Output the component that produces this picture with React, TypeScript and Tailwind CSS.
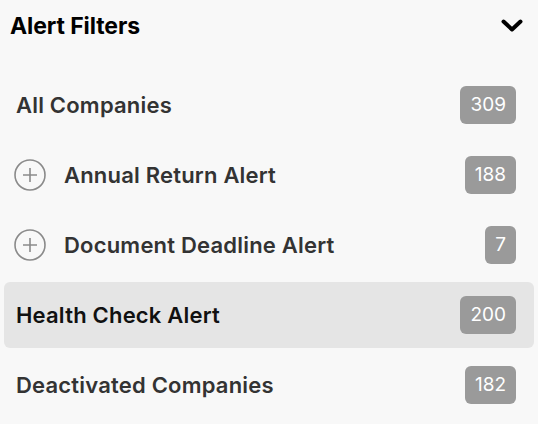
interface FilterRow {
  label: string;
  count: number;
  expandable?: boolean;
  active?: boolean;
}

const rows: FilterRow[] = [
  { label: "All Companies", count: 309 },
  { label: "Annual Return Alert", count: 188, expandable: true },
  { label: "Document Deadline Alert", count: 7, expandable: true },
  { label: "Health Check Alert", count: 200, active: true },
  { label: "Deactivated Companies", count: 182 },
];

function PlusCircle() {
  return (
    <svg width="32" height="32" viewBox="0 0 32 32" className="shrink-0">
      <circle cx="16" cy="16" r="15" fill="none" stroke="#8a8a8a" strokeWidth="1.6" />
      <path d="M16 9v14M9 16h14" stroke="#8a8a8a" strokeWidth="1.6" />
    </svg>
  );
}

function Chevron() {
  return (
    <svg width="22" height="14" viewBox="0 0 22 14">
      <path
        d="M2.5 2.5 11 10.5 19.5 2.5"
        fill="none"
        stroke="#000"
        strokeWidth="4"
        strokeLinecap="round"
        strokeLinejoin="round"
      />
    </svg>
  );
}

export default function App() {
  return (
    <div
      className="w-[538px] h-[424px] bg-[#f8f8f8] overflow-hidden"
      style={{ fontFamily: "Inter, 'Open Sans', sans-serif" }}
    >
      <div className="flex items-center justify-between h-[52px] pl-[10px] pr-[15px]">
        <h2 className="text-[23px] font-bold text-black tracking-[-0.1px]">Alert Filters</h2>
        <Chevron />
      </div>
      <div className="flex flex-col px-[4px] pt-[20px]">
        {rows.map((r) => (
          <div
            key={r.label}
            className={`flex items-center justify-between h-[66px] mb-[4px] pl-[10px] pr-[18px] rounded-md ${
              r.active ? "bg-[#e5e5e5]" : ""
            }`}
          >
            <div className="flex items-center gap-[18px]">
              {r.expandable && <PlusCircle />}
              <span
                className={`text-[22px] font-semibold tracking-[0.2px] ${
                  r.active ? "text-[#111]" : "text-[#333]"
                } ${r.expandable ? "" : "pl-[2px]"}`}
              >
                {r.label}
              </span>
            </div>
            <span className="min-w-[30px] h-[38px] px-[10px] flex items-center justify-center rounded-md bg-[#9a9a9a] text-white text-[19px]">
              {r.count}
            </span>
          </div>
        ))}
      </div>
    </div>
  );
}
